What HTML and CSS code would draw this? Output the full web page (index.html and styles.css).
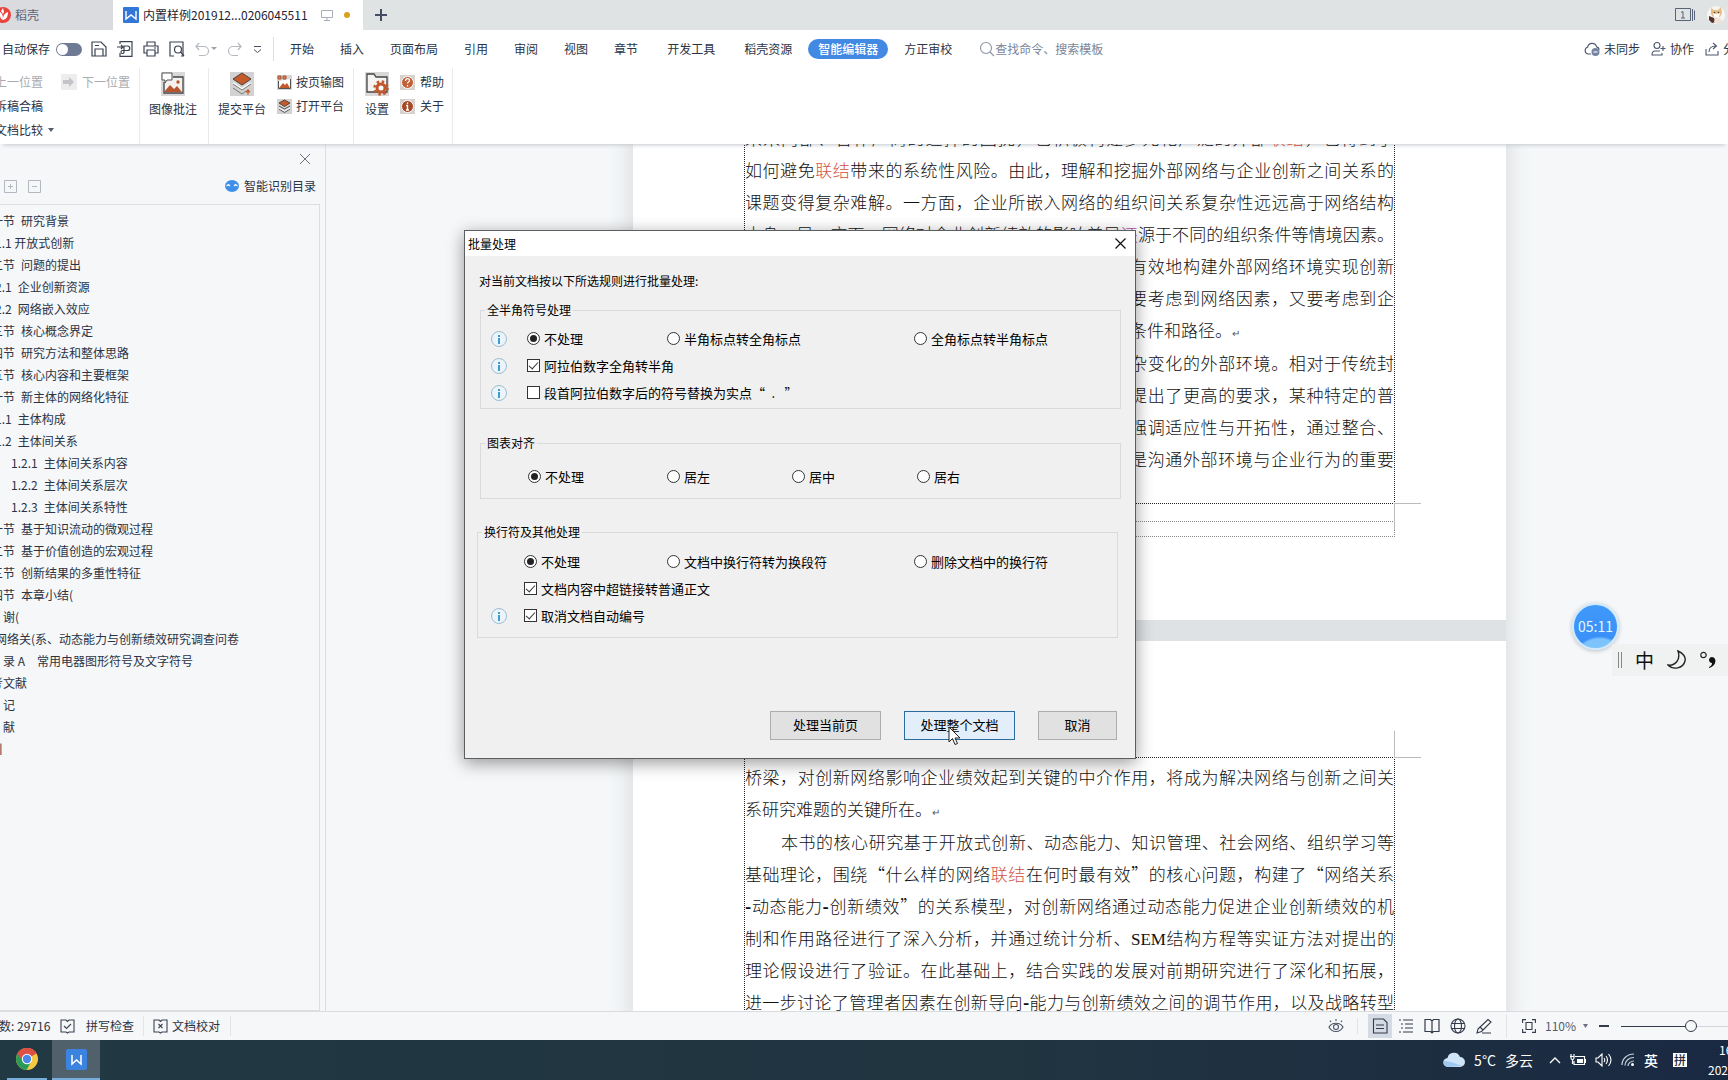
FILE: index.html
```html
<!DOCTYPE html>
<html lang="zh-CN">
<head>
<meta charset="utf-8">
<title>内置样例 - 批量处理</title>
<link rel="stylesheet" href="styles.css">
</head>
<body>
<header class="tabbar">
  <button class="doc-tab home-tab">
    <svg class="docer" width="12" height="18" viewBox="0 0 12 18"><circle cx="3" cy="9" r="8" fill="#e8443c"/><path d="M3 14C-1 12 0 8 0 6c2 1 3 3 3 8zM3 14c0-5 2-7 5-8 0 4-1 7-5 8zM1 5l2-3 1 4-1 2z" fill="#fff"/></svg>
    <span>稻壳</span>
  </button>
  <button class="doc-tab active-tab">
    <svg width="16" height="16" viewBox="0 0 16 16"><rect width="16" height="16" rx="1" fill="#3277d8"/><path d="M3 4v8l5-4 5 4V4" fill="none" stroke="#fff" stroke-width="1.4"/></svg>
    <span class="tab-title">内置样例201912...0206045511</span>
    <svg width="12" height="12" viewBox="0 0 12 12" fill="none" stroke="#a9afba"><path d="M.5 1.500h11v7H.5zM6 8.500v3M3 11.500h6"/></svg>
    <i class="unsaved"></i>
  </button>
  <button class="new-tab" aria-label="新建"><svg width="12" height="12" viewBox="0 0 12 12"><path d="M6 0v12M0 6h12" stroke="#444d63" stroke-width="2"/></svg></button>
  <div class="tabbar-end">
    <svg width="21" height="16" viewBox="0 0 21 16" fill="none" stroke="#58637a"><path d="M.5 1.500h15v12H.5zM17.500 2v12M19.500 3.500V13M6 5.500l2-1V11M6 11h4"/></svg>
    <svg width="21" height="20" viewBox="0 0 21 20"><circle cx="9" cy="10" r="9" fill="#f8f5f1"/><path d="M4 3l3 2h4l3-3 1 6-2 4H6L4 9z" fill="#e6bd87"/><path d="M6 8l3 1 4-1-1 4H7z" fill="#fff"/><path d="M2 11l5 2 2 4-4 1-3-3z" fill="#52312a"/><path d="M8 12l5 1 3 4-5 2-4-2z" fill="#eee2d8"/><circle cx="7.500" cy="7.500" r=".8" fill="#47362c"/><circle cx="11.500" cy="7.500" r=".8" fill="#47362c"/></svg>
  </div>
</header>

<nav class="menubar">
  <label class="autosave">自动保存<input type="checkbox" class="switch"></label>
  <div class="quick">
    <button aria-label="保存"><svg width="16" height="16" viewBox="0 0 16 16" fill="none" stroke="#3c4353" stroke-width="1.200"><path d="M1 1h9l5 5v9H1zM4 15V8h8v7M4 4.500h4"/></svg></button>
    <button aria-label="输出为PDF"><svg width="16" height="16" viewBox="0 0 16 16" fill="none" stroke="#3c4353" stroke-width="1.200"><path d="M3 3V.600h12v14.800H3V12M0 6h6M4 4l2 2-2 2M7 12V5h3.500a2.200 2.200 0 0 1 0 4.500H5.500a1.500 1.500 0 1 0 1.500 1.500"/></svg></button>
    <button aria-label="打印"><svg width="16" height="16" viewBox="0 0 16 16" fill="none" stroke="#3c4353" stroke-width="1.200"><path d="M4 5V1h8v4M4 12H1V5h14v7h-3M4 9h8v6H4zM11 7h2"/></svg></button>
    <button aria-label="打印预览"><svg width="16" height="16" viewBox="0 0 16 16" fill="none" stroke="#3c4353" stroke-width="1.200"><path d="M5 15H1V1h13v14h-2"/><circle cx="9" cy="8.500" r="3.500"/><path d="M11.500 11l3.500 4"/></svg></button>
    <button aria-label="撤销"><svg width="22" height="16" viewBox="0 0 22 16" fill="none" stroke="#b4b8bf" stroke-width="1.200"><path d="M4 2L1 5.500 4 9M1 5.500h8a4.500 4.500 0 0 1 0 9H4"/><path d="M16 6h6l-3 3z" fill="#9da2ab" stroke="none"/></svg></button>
    <button aria-label="恢复"><svg width="16" height="16" viewBox="0 0 16 16" fill="none" stroke="#b4b8bf" stroke-width="1.200"><path d="M11 2l3 3.500L11 9M14 5.500H6a4.500 4.500 0 0 0 0 9h5"/></svg></button>
    <button aria-label="更多"><svg width="9" height="10" viewBox="0 0 9 10" fill="none" stroke="#4b5262"><path d="M1 2.500h7M1 5.500l3.500 3L8 5.500"/></svg></button>
  </div>
  <div class="menus">
    <button>开始</button><button>插入</button><button>页面布局</button><button>引用</button><button>审阅</button><button>视图</button><button>章节</button><button class="spaced">开发工具</button><button>稻壳资源</button><button class="current">智能编辑器</button><button>方正审校</button>
  </div>
  <label class="search"><svg width="16" height="16" viewBox="0 0 16 16" fill="none" stroke="#8c95a5" stroke-width="1.100"><circle cx="7" cy="7" r="5.500"/><path d="M11 11l4 4"/></svg><input type="text" placeholder="查找命令、搜索模板" aria-label="查找命令、搜索模板"></label>
  <div class="menubar-end">
    <button><svg width="16" height="16" viewBox="0 0 16 16" fill="none" stroke="#4d586e" stroke-width="1.100"><path d="M7 13H4a3.500 3.500 0 0 1-.4-6.800 4.600 4.600 0 0 1 9-.3A3 3 0 0 1 15 9"/><circle cx="11.500" cy="11" r="4" fill="#7784a0" stroke="none"/><path d="M9.500 11h4" stroke="#fff"/></svg>未同步</button>
    <button><svg width="15" height="16" viewBox="0 0 15 16" fill="none" stroke="#4d586e" stroke-width="1.100"><circle cx="6" cy="4.500" r="3"/><path d="M9 10H4c-2 0-3 1-3 4h10v-2M9.500 7.500h5M12 5v5"/></svg>协作</button>
    <button class="share"><svg width="14" height="16" viewBox="0 0 14 16" fill="none" stroke="#4d586e" stroke-width="1.100"><path d="M1 8v6h12v-4M4 11c0-4 2-6 7-6M8 2l3.500 3L8 8"/></svg>分享</button>
  </div>
</nav>

<section class="ribbon">
  <div class="group nav-group">
    <button class="off cut">上一位置</button>
    <button class="off"><svg width="16" height="16" viewBox="0 0 16 16"><rect width="16" height="16" fill="#ededee"/><path d="M2 6h6V3l5 5-5 5v-3H2z" fill="#c2c4c7"/></svg>下一位置</button>
    <button class="cut">拆稿合稿</button><span></span>
    <button class="cut">文档比较<svg width="6" height="4" viewBox="0 0 6 4"><path d="M0 0h6L3 4z" fill="#555c6a"/></svg></button>
  </div>
  <div class="group">
    <button class="big"><svg width="24" height="24" viewBox="0 0 24 24"><rect width="24" height="24" fill="#d8d8d8"/><path d="M3 10v11h19V5H12" fill="#f4f1ef" stroke="#444" stroke-width="1.300"/><path d="M1 1h10v7H6l-2 3V8H1z" fill="#fff" stroke="#555"/><path d="M3 20l6-7 4 4 3-3 5 6z" fill="#b9552e"/><circle cx="17" cy="10" r="1.700" fill="#b9552e"/></svg>图像批注</button>
  </div>
  <div class="group submit">
    <button class="big"><svg width="24" height="24" viewBox="0 0 24 24"><rect width="24" height="24" fill="#d2d2d2"/><path d="M3 7l9-6 9 6-9 6z" fill="#c55a2b" stroke="#50413a"/><path d="M3 11l9 6 9-6" fill="none" stroke="#fff" stroke-width="2"/><path d="M3 12l9 6 9-6M3 16l9 6 4-3" fill="none" stroke="#777"/><path d="M18 23v-5M16 20l2-2.500 2 2.500z" stroke="#c55a2b" fill="#c55a2b"/></svg>提交平台</button>
    <div class="stack">
      <button><svg width="15" height="15" viewBox="0 0 15 15"><rect width="15" height="15" fill="#d8d5d3"/><path d="M1.500 6v7.500h12V4" fill="#fff" stroke="#555"/><path d="M2 13l4-5 2 2 2-2 3 5z" fill="#c45b30"/><path d="M1 1h3v3H1zM6 1h3v3H6z" fill="#d98462" stroke="#a4502d"/></svg>按页输图</button>
      <button><svg width="15" height="15" viewBox="0 0 15 15"><rect width="15" height="15" fill="#d2d2d2"/><path d="M2 4l5.500-3L13 4 7.500 7.500z" fill="#c55a2b" stroke="#5c4238"/><path d="M2 7l5.500 3L13 7M2 10l5.500 3.500L13 10" fill="none" stroke="#555"/><path d="M2 9l5.500 3L13 9" fill="none" stroke="#fff"/></svg>打开平台</button>
    </div>
  </div>
  <div class="group settings">
    <button class="big"><svg width="24" height="24" viewBox="0 0 24 24"><rect width="24" height="24" fill="#d8d8d8"/><path d="M2 20V2h7l2 3h11v15z" fill="#f5f4f3" stroke="#444" stroke-width="1.300"/><circle cx="16" cy="16" r="4" fill="#fff" stroke="#c0582c" stroke-width="3"/><circle cx="16" cy="16" r="6.500" fill="none" stroke="#c0582c" stroke-width="2.500" stroke-dasharray="2.500 2.600"/></svg>设置</button>
    <div class="stack">
      <button><svg width="15" height="15" viewBox="0 0 15 15"><rect width="15" height="15" fill="#d5d2d0"/><circle cx="7.500" cy="7.500" r="6" fill="#c35e36" stroke="#fff"/><path d="M5.500 6c0-3 4-3 4-.500 0 1.500-2 1.500-2 3M7.500 10v1.500" fill="none" stroke="#fff" stroke-width="1.300"/></svg>帮助</button>
      <button><svg width="15" height="15" viewBox="0 0 15 15"><rect width="15" height="15" fill="#d5d2d0"/><circle cx="7.500" cy="7.500" r="6" fill="#a84a26" stroke="#fff"/><path d="M7.500 3.500V5M6 6.500h1.500V11M6 11h3" fill="none" stroke="#fff" stroke-width="1.400"/></svg>关于</button>
    </div>
  </div>
</section>

<main class="workspace">
  <aside class="outline">
    <div class="outline-close"><button aria-label="关闭"><svg width="10" height="10" viewBox="0 0 10 10"><path d="M0 0l10 10M10 0L0 10" stroke="#6a7180"/></svg></button></div>
    <div class="outline-tools">
      <button aria-label="展开"><svg width="13" height="13" viewBox="0 0 13 13" fill="none" stroke="#b3b7bf"><path d="M.5.500h12v12H.5zM4 6.500h5M6.500 4v5"/></svg></button>
      <button aria-label="折叠"><svg width="13" height="13" viewBox="0 0 13 13" fill="none" stroke="#b3b7bf"><path d="M.5.500h12v12H.5zM4 6.500h5"/></svg></button>
      <button class="smart"><svg width="14" height="12" viewBox="0 0 14 12"><ellipse cx="7" cy="6" rx="7" ry="6" fill="#3f8fe8"/><path d="M1.500 6l2-1.500L5 6M9 6l1.500-1.500L12.500 6" fill="none" stroke="#fff" stroke-width="1.200"/></svg>智能识别目录</button>
    </div>
    <ul class="toc">
      <li class="sec">一节&ensp;研究背景</li>
      <li class="sub">1.1 开放式创新</li>
      <li class="sec">二节&ensp;问题的提出</li>
      <li class="sub">2.1&ensp;企业创新资源</li>
      <li class="sub">2.2&ensp;网络嵌入效应</li>
      <li class="sec">三节&ensp;核心概念界定</li>
      <li class="sec">四节&ensp;研究方法和整体思路</li>
      <li class="sec">五节&ensp;核心内容和主要框架</li>
      <li class="sec">一节&ensp;新主体的网络化特征</li>
      <li class="sub">1.1&ensp;主体构成</li>
      <li class="sub">1.2&ensp;主体间关系</li>
      <li class="deep">1.2.1&ensp;主体间关系内容</li>
      <li class="deep">1.2.2&ensp;主体间关系层次</li>
      <li class="deep">1.2.3&ensp;主体间关系特性</li>
      <li class="sec">一节&ensp;基于知识流动的微观过程</li>
      <li class="sec">二节&ensp;基于价值创造的宏观过程</li>
      <li class="sec">三节&ensp;创新结果的多重性特征</li>
      <li class="sec">四节&ensp;本章小结(</li>
      <li class="flat">谢(</li>
      <li class="sub">网络关(系、动态能力与创新绩效研究调查问卷</li>
      <li class="flat">录 A　常用电器图形符号及文字符号</li>
      <li class="sec">考文献</li>
      <li class="flat">记</li>
      <li class="flat">献</li>
      <li class="sec">引</li>
    </ul>
  </aside>

  <div class="canvas">
    <div class="pages">
      <article class="page first">
        <div class="frame">
          <p><span>来来内部、合作厂商的选择的困扰，也积极构建多元化广泛的外部<em>联结</em>，也得到了</span>
          <span>如何避免<em>联结</em>带来的系统性风险。由此，理解和挖掘外部网络与企业创新之间关系的</span>
          <span>课题变得复杂难解。一方面，企业所嵌入网络的组织间关系复杂性远远高于网络结构</span>
          <span>本身。另一方面，网络对企业创新绩效的影响差异<b class="mark">还</b>源于不同的组织条件等情境因素。</span>
          <span class="tail">有效地构建外部网络环境实现创新</span>
          <span class="tail">要考虑到网络因素，又要考虑到企</span>
          <span class="tail last">条件和路径。<small>↵</small></span></p>
          <p><span class="tail">杂变化的外部环境。相对于传统封</span>
          <span class="tail">提出了更高的要求，某种特定的普</span>
          <span class="tail">强调适应性与开拓性，通过整合、</span>
          <span class="tail">是沟通外部环境与企业行为的重要</span></p>
        </div>
        <div class="page-foot"></div>
      </article>
      <article class="page second">
        <div class="frame">
          <p><span>桥梁，对创新网络影响企业绩效起到关键的中介作用，将成为解决网络与创新之间关</span>
          <span class="last">系研究难题的关键所在。<small>↵</small></span></p>
          <p><span class="indent">本书的核心研究基于开放式创新、动态能力、知识管理、社会网络、组织学习等</span>
          <span>基础理论，围绕“什么样的网络<em>联结</em>在何时最有效”的核心问题，构建了“网络关系</span>
          <span><b>-</b>动态能力<b>-</b>创新绩效”的关系模型，对创新网络通过动态能力促进企业创新绩效的机</span>
          <span>制和作用路径进行了深入分析，并通过统计分析、<i>SEM</i>结构方程等实证方法对提出的</span>
          <span>理论假设进行了验证。在此基础上，结合实践的发展对前期研究进行了深化和拓展，</span>
          <span>进一步讨论了管理者因素在创新导向<b>-</b>能力与创新绩效之间的调节作用，以及战略转型</span></p>
        </div>
      </article>
    </div>
  </div>
</main>

<footer class="statusbar">
  <span class="count">数: 29716</span>
  <button class="spell"><svg width="15" height="15" viewBox="0 0 15 15" fill="none" stroke="#3c4353" stroke-width="1.100"><path d="M6 1H1v12h5l1.500 1L9 13h5V1H9L7.500 2.500z"/><path d="M4 7l2.500 2.500L11 5"/></svg>拼写检查</button>
  <button class="proof"><svg width="15" height="15" viewBox="0 0 15 15" fill="none" stroke="#3c4353" stroke-width="1.100"><path d="M6 1H1v12h5l1.500 1L9 13h5V1H9L7.500 2.500z"/><path d="M5.500 5l4 4M9.500 5l-4 4"/></svg>文档校对</button>
  <div class="views">
    <button aria-label="护眼" class="eye"><svg width="16" height="16" viewBox="0 0 16 16" fill="none" stroke="#4a5161" stroke-width="1.100"><path d="M1 9c3-5 11-5 14 0-3 6-11 6-14 0zM3 4L2 2.500M8 3V1M13 4l1-1.500"/><circle cx="8" cy="9" r="2.500"/></svg></button>
    <button aria-label="页面视图" class="on"><svg width="16" height="16" viewBox="0 0 16 16" fill="none" stroke="#343b4a" stroke-width="1.100"><path d="M1.500 1h10L15 4.500V15H1.500zM4 7h8M4 10.500h8"/></svg></button>
    <button aria-label="大纲"><svg width="16" height="16" viewBox="0 0 16 16" fill="none" stroke="#343b4a" stroke-width="1.200"><path d="M1 2h2M5 2h10M3 6h2M7 6h8M3 10h2M7 10h8M1 14h2M5 14h10"/></svg></button>
    <button aria-label="阅读版式"><svg width="16" height="16" viewBox="0 0 16 16" fill="none" stroke="#343b4a" stroke-width="1.200"><path d="M8 3L6.500 1.500H1v12h5.500L8 15l1.500-1.500H15v-12H9.500zM8 3v11"/></svg></button>
    <button aria-label="Web版式"><svg width="16" height="16" viewBox="0 0 16 16" fill="none" stroke="#343b4a" stroke-width="1.100"><circle cx="8" cy="8" r="7"/><ellipse cx="8" cy="8" rx="3.500" ry="7"/><path d="M1.500 5.500h13M1.500 10.500h13"/></svg></button>
    <button aria-label="写作模式"><svg width="16" height="16" viewBox="0 0 16 16" fill="none" stroke="#343b4a" stroke-width="1.100"><path d="M2 11L12 1.500l3 2.500L5.500 13.500 1 15zM4 9l3 3M6 15h9"/></svg></button>
  </div>
  <div class="zoom">
    <button aria-label="适合窗口"><svg width="14" height="14" viewBox="0 0 14 14" fill="none" stroke="#343b4a" stroke-width="1.100"><path d="M.6 4V.600H4M10 .600h3.400V4M13.400 10v3.400H10M4 13.400H.6V10M4 3.500h6v7H4z"/></svg></button>
    <button class="percent">110%<svg width="5" height="4" viewBox="0 0 5 4"><path d="M0 0h5L2.500 4z" fill="#6a7180"/></svg></button>
    <button aria-label="缩小"><svg width="10" height="2" viewBox="0 0 10 2"><path d="M0 0h10v2H0z" fill="#343b4a"/></svg></button>
    <input type="range" aria-label="显示比例" min="0" max="100" value="50">
  </div>
</footer>

<footer class="taskbar">
  <button class="app chrome" aria-label="Chrome"><svg width="22" height="22" viewBox="0 0 22 22"><circle cx="11" cy="11" r="11" fill="#f6c944"/><path d="M11 11L1.500 5.500A11 11 0 0 1 20.500 5.500z" fill="#dc5144"/><path d="M11 11L1.500 5.500A11 11 0 0 0 10.500 22l4.500-8z" fill="#2c9a57"/><path d="M11 6h9.700A11 11 0 0 0 1.500 5.500L6.500 13z" fill="#dc5144"/><circle cx="11" cy="11" r="5.200" fill="#fff"/><circle cx="11" cy="11" r="4.200" fill="#4a87e8"/></svg></button>
  <button class="app wps" aria-label="WPS"><svg width="21" height="21" viewBox="0 0 21 21"><rect width="21" height="21" rx="2" fill="#3c82df"/><path d="M6 6v9l4.500-4 4.500 4V6" fill="none" stroke="#fff" stroke-width="1.500"/></svg></button>
  <div class="tray">
    <svg width="22" height="16" viewBox="0 0 22 16"><path d="M5 15a4.500 4.500 0 0 1-.5-9A6.500 6.500 0 0 1 17 5a5 5 0 0 1 0 10z" fill="#cfe4f7"/><path d="M5 15a4.500 4.500 0 0 1-4-6c5 0 13 3 18 5z" fill="#9ec8ee"/></svg>
    <span class="temp">5°C</span><span class="sky">多云</span>
    <svg width="12" height="8" viewBox="0 0 12 8"><path d="M1 7l5-5 5 5" fill="none" stroke="#fff" stroke-width="1.300"/></svg>
    <svg width="16" height="12" viewBox="0 0 16 12" fill="none" stroke="#fff" stroke-width="1.200"><path d="M5 2.500h9.500v8H4V7M0 2.500h4M1 0v4c0 2 3 2 3 0V0M2.500 6v4M15.500 5v4"/><path d="M7 5h6v4H7z" fill="#fff" stroke="none"/></svg>
    <svg width="17" height="14" viewBox="0 0 17 14" fill="none" stroke="#fff" stroke-width="1.100"><path d="M1 5h2l4-4v12L3 9H1zM9 5q1.500 2 0 4M11 3q3 4 0 8M13.500 1q5 6 0 12"/></svg>
    <svg width="14" height="14" viewBox="0 0 14 14" fill="none" stroke="#c9d2dc" stroke-width="1.200"><path d="M1 12C1 6 6 1 13 1M4 12.500C4 8 8 4.500 13 4.500M7 13c0-3 3-5 6-5"/><circle cx="11.500" cy="11.500" r="1.500" fill="#fff" stroke="none"/></svg>
    <b class="lang">英</b><b class="ime">拼</b>
    <div class="clock"><span>16</span><span>202</span></div>
  </div>
</footer>

<div class="timer">05:11</div>
<div class="imebar">
  <i></i><span>中</span>
  <svg width="20" height="20" viewBox="0 0 20 20"><path d="M11 1c5 2 8 6 7 10-2 8-12 9-17 4 7 1 13-5 10-14z" fill="none" stroke="#222" stroke-width="1.400"/></svg>
  <svg width="17" height="18" viewBox="0 0 17 18"><circle cx="3.500" cy="4" r="2.700" fill="none" stroke="#222" stroke-width="1.200"/><path d="M9 16c2-1 3-2 3-4-4 0-4-6 0-6 5 0 5 9-3 11z" fill="#111"/></svg>
</div>

<section class="dialog" role="dialog" aria-labelledby="dlg-title">
  <div class="dialog-title"><h1 id="dlg-title">批量处理</h1><button aria-label="关闭"><svg width="11" height="11" viewBox="0 0 11 11"><path d="M.5.500l10 10M10.500.500l-10 10" stroke="#111" stroke-width="1.200"/></svg></button></div>
  <form class="dialog-body">
    <p class="intro">对当前文档按以下所选规则进行批量处理:</p>
    <fieldset class="symbols">
      <legend>全半角符号处理</legend>
      <div class="row"><i class="info"></i><label><input type="radio" name="sym" checked>不处理</label><label><input type="radio" name="sym">半角标点转全角标点</label><label><input type="radio" name="sym">全角标点转半角标点</label></div>
      <div class="row"><i class="info"></i><label class="wide"><input type="checkbox" checked>阿拉伯数字全角转半角</label></div>
      <div class="row"><i class="info"></i><label class="wide"><input type="checkbox">段首阿拉伯数字后的符号替换为实点“&ensp;.&ensp;&nbsp;”</label></div>
    </fieldset>
    <fieldset class="align">
      <legend>图表对齐</legend>
      <div class="row"><span></span><label><input type="radio" name="al" checked>不处理</label><label><input type="radio" name="al">居左</label><label><input type="radio" name="al">居中</label><label><input type="radio" name="al">居右</label></div>
    </fieldset>
    <fieldset class="breaks">
      <legend>换行符及其他处理</legend>
      <div class="row"><span></span><label><input type="radio" name="br" checked>不处理</label><label><input type="radio" name="br">文档中换行符转为换段符</label><label><input type="radio" name="br">删除文档中的换行符</label></div>
      <div class="row"><span></span><label class="wide"><input type="checkbox" checked>文档内容中超链接转普通正文</label></div>
      <div class="row"><i class="info"></i><label class="wide"><input type="checkbox" checked>取消文档自动编号</label></div>
    </fieldset>
    <div class="actions">
      <button type="button">处理当前页</button>
      <button type="button" class="hot">处理整个文档<svg class="pointer" width="13" height="20" viewBox="0 0 13 20"><path d="M1 1v15l3.500-3.500L7 18.500l2.500-1L7 12h5z" fill="#fff" stroke="#222"/></svg></button>
      <button type="button" class="cancel">取消</button>
    </div>
  </form>
</section>
</body>
</html>
```
FILE: styles.css
```css
* { box-sizing: border-box; }

body {
  margin: 0;
  height: 100vh;
  position: relative;
  display: flex;
  flex-direction: column;
  overflow: hidden;
  font: 12px/20px "Noto Sans CJK SC", "Noto Sans", sans-serif;
  color: #2b3344;
  background: #f5f7f9;
}

button, input {
  font: inherit;
  color: inherit;
  margin: 0;
}

button {
  display: flex;
  align-items: center;
  padding: 0;
  border: 0;
  background: none;
  white-space: nowrap;
}

svg { display: block; flex: none; }
h1, p, ul, fieldset { margin: 0; padding: 0; }

/* document tabs */
.tabbar {
  flex: none;
  display: flex;
  height: 30px;
  background: #e0e3e4;
}
.home-tab { width: 113px; gap: 3px; background: #d9dbde; color: #5a6377; }
.active-tab { width: 250px; padding-left: 10px; gap: 4px; background: #fff; color: #1d2433; }
.tab-title { width: 174px; text-align: left; }
.unsaved { width: 6px; height: 6px; margin-left: 7px; border-radius: 50%; background: #d9a01f; }
.new-tab { margin-left: 12px; }
.tabbar-end { margin-left: auto; display: flex; align-items: center; gap: 11px; }

/* menu row */
.menubar {
  flex: none;
  display: flex;
  align-items: center;
  height: 38px;
  padding-left: 2px;
  background: #fff;
}
.autosave { display: flex; align-items: center; gap: 6px; white-space: nowrap; }
.switch {
  appearance: none;
  display: flex;
  width: 26px;
  height: 13px;
  padding: 1px;
  border-radius: 7px;
  background: #6f7a94;
}
.switch::before { content: ""; width: 11px; height: 11px; border-radius: 50%; background: #fff; }
.quick {
  display: flex;
  align-items: center;
  gap: 10px;
  height: 24px;
  padding: 0 11px 0 9px;
  border-right: 1px solid #dcdfe3;
}
.menus { display: flex; align-items: center; gap: 26px; margin-left: 16px; }
.menus .spaced { padding: 0 3px; }
.menus .current {
  margin: 0 -10px;
  padding: 0 10px;
  border-radius: 10px;
  color: #fff;
  font-weight: 500;
  background: #4289e4;
}
.search { display: flex; align-items: center; margin-left: 27px; }
.search input { width: 120px; padding: 0; border: 0; outline: 0; }
.search input::placeholder { color: #7a8599; opacity: 1; }
.menubar-end { display: flex; gap: 11px; margin-left: auto; }
.menubar-end button { gap: 4px; }
.menubar-end .share { width: 23px; overflow: hidden; }

/* ribbon */
.ribbon {
  flex: none;
  position: relative;
  display: flex;
  height: 76px;
  background: #fff;
  box-shadow: 0 4px 4px -3px #c4c7cb;
}
.group {
  display: flex;
  align-items: flex-start;
  gap: 11px;
  padding: 4px 11px 0 9px;
  border-right: 1px solid #e8eaec;
}
.group .big { flex-direction: column; gap: 3px; }
.nav-group {
  display: grid;
  grid-template-columns: 61px 69px;
  grid-auto-rows: 24px;
  gap: 0;
  width: 140px;
  padding: 4px 9px 0 0;
}
.nav-group button { gap: 5px; }
.nav-group .cut { margin-left: -5px; }
.nav-group .off { color: #a9abaf; }
.stack { display: flex; flex-direction: column; gap: 4px; }
.stack button { gap: 4px; }
.submit { padding: 4px 9px 0; }
.settings { padding: 4px 8px 0 11px; }
.settings .stack button { gap: 5px; }

/* outline pane */
.workspace { flex: 1; min-height: 0; display: flex; }
.outline {
  flex: none;
  display: flex;
  flex-direction: column;
  width: 326px;
  border-right: 1px solid #dcdfe2;
  overflow: hidden;
}
.outline-close { display: flex; justify-content: flex-end; padding: 10px 15px 0 0; }
.outline-tools {
  display: flex;
  align-items: center;
  gap: 11px;
  height: 40px;
  margin-top: 2px;
  padding: 0 9px 0 4px;
}
.outline-tools .smart { margin-left: auto; gap: 5px; }
.toc {
  flex: 1;
  list-style: none;
  width: 320px;
  margin-top: -2px;
  padding-top: 5px;
  border: 1px solid #dcdfe2;
  border-left: 0;
}
.toc li { height: 22px; line-height: 22px; white-space: nowrap; }
.toc .sec { margin-left: -9px; }
.toc .sub { margin-left: -5px; }
.toc .deep { margin-left: 11px; }
.toc .flat { margin-left: 3px; }

/* document canvas */
.canvas {
  flex: 1;
  min-width: 0;
  display: flex;
  align-items: flex-start;
  justify-content: center;
  padding-left: 85px;
  overflow: hidden;
}
.pages {
  flex: none;
  display: flex;
  flex-direction: column;
  gap: 21px;
  width: 873px;
  margin-top: -22px;
  background: #dfe2e4;
  box-shadow: 0 0 18px 6px #dfe2e4;
}
.page { padding: 0 111px; background: #fff; }
.page.first { padding-bottom: 83px; }
.page.second { padding-top: 116px; }
.frame {
  position: relative;
  border: 1px dotted #222;
  font-size: 17px;
  line-height: 32px;
  font-weight: 300;
  color: #111;
}
.first .frame { border-top: 0; padding-bottom: 28px; }
.second .frame { padding-top: 3px; border-bottom: 0; }
.frame p + p { margin-top: 1px; }
.frame span {
  display: block;
  height: 32px;
  white-space: nowrap;
  text-align-last: justify;
}
.frame .tail { width: 264px; margin-left: auto; }
.frame .last { text-align-last: left; }
.frame .indent { padding-left: 36px; }
.frame em { font-style: normal; color: #d0513f; }
.frame i { font: 400 17px "Liberation Serif", serif; }
.frame b { font-weight: 700; }
.frame .mark { font-weight: 300; color: #b04fb0; }
.frame small { font-size: 10px; color: #555; }

/* crop marks at the text area corners */
.frame::after {
  content: "";
  position: absolute;
  right: -27px;
  width: 26px;
  height: 26px;
}
.first .frame::after { bottom: -27px; border-top: 1px solid #bbb; border-left: 1px solid #bbb; }
.second .frame::after { top: -27px; border-bottom: 1px solid #bbb; border-left: 1px solid #bbb; }
.page-foot { height: 16px; margin-top: 17px; border: 1px dotted #888; }

/* status bar */
.statusbar {
  flex: none;
  display: flex;
  align-items: center;
  height: 29px;
  border-top: 1px solid #d9dcdf;
  overflow: hidden;
}
.count { width: 61px; margin-left: -1px; white-space: nowrap; }
.spell { gap: 11px; padding-right: 9px; border-right: 1px solid #e1e4e8; }
.proof { gap: 4px; margin-left: 9px; padding-right: 10px; border-right: 1px solid #e1e4e8; }
.views { display: flex; align-items: center; gap: 10px; margin-left: auto; padding-right: 14px; border-right: 1px solid #e1e4e8; }
.views .eye { padding-right: 13px; border-right: 1px solid #e1e4e8; }
.views .on { height: 24px; margin-right: -4px; padding: 0 4px; background: #d5dbe4; }
.zoom { display: flex; align-items: center; width: 221px; padding-left: 15px; }
.percent { gap: 7px; margin: 0 11px 0 9px; color: #555d6c; }
.zoom input {
  appearance: none;
  flex: none;
  width: 140px;
  height: 12px;
  margin-left: 12px;
  background: linear-gradient(90deg, #343b4a 50%, #d3d7dc 50%) center / 100% 1px no-repeat;
}
.zoom input::-webkit-slider-thumb {
  appearance: none;
  width: 12px;
  height: 12px;
  border: 1px solid #343b4a;
  border-radius: 50%;
  background: #f5f7f9;
}

/* taskbar */
.taskbar {
  flex: none;
  display: flex;
  height: 40px;
  padding-left: 7px;
  color: #fff;
  background: linear-gradient(90deg, #213942, #203440 60%, #1a2942);
  overflow: hidden;
}
.app { justify-content: center; border-bottom: 2px solid #76addb; }
.chrome { width: 40px; margin-right: 5px; }
.wps { width: 48px; background: #50616b; }
.tray { display: flex; align-items: center; margin-left: auto; gap: 9px; font-size: 14px; }
.tray .sky { margin-right: 7px; }
.lang { font-weight: 500; }
.ime {
  width: 14px;
  height: 14px;
  margin: 0 12px 0 6px;
  font-size: 12px;
  line-height: 14px;
  font-weight: 500;
  text-align: center;
  color: #1b2b40;
  background: #fff;
}
.clock {
  display: flex;
  flex-direction: column;
  align-items: flex-end;
  width: 20px;
  font-size: 12px;
}
.clock span:first-child { width: 9px; }

/* floating widgets */
.timer {
  position: absolute;
  right: 109px;
  top: 603px;
  width: 47px;
  height: 47px;
  border: 2px solid #cfeaff;
  border-radius: 50%;
  line-height: 43px;
  font-size: 14px;
  text-align: center;
  color: #e4f7ff;
  background: radial-gradient(circle at 60% 140%, #7cc4fb 40%, #3b90f8 44%, #3f9bfa);
  box-shadow: 0 1px 4px #b8bcc0;
}
.imebar {
  position: absolute;
  right: 0;
  top: 644px;
  display: flex;
  align-items: center;
  gap: 13px;
  width: 116px;
  height: 32px;
  padding-left: 6px;
  font-size: 19px;
  color: #111;
  background: #f0f1f1;
}
.imebar i { width: 4px; height: 16px; border: 1px solid #888; border-width: 0 1px; }

/* batch dialog */
.dialog {
  position: absolute;
  left: 464px;
  top: 230px;
  width: 672px;
  border: 1px solid #5c5f62;
  color: #000;
  background: #f0f0f0;
  box-shadow: 0 4px 16px rgba(0, 0, 0, .4);
}
.dialog-title {
  display: flex;
  align-items: center;
  justify-content: space-between;
  height: 25px;
  padding: 0 9px 0 3px;
  background: #fff;
}
.dialog-title h1 { font-size: 12px; font-weight: 400; }
.dialog-body { padding: 15px 14px 18px; }
.dialog fieldset { min-width: 0; margin-left: 1px; border: 1px solid #dadada; }
.dialog legend { margin-left: 4px; padding: 0 2px; }
.dialog .symbols { margin-top: 9px; padding: 5px 0 2px; }
.dialog .align { margin-top: 24px; padding: 10px 0 8px; }
.dialog .breaks { margin: 23px 3px 0 -2px; padding: 6px 0 8px; }
.row {
  display: grid;
  grid-template-columns: 36px 140px 247px 1fr;
  align-items: center;
  height: 27px;
  padding-left: 10px;
  font-size: 13px;
}
.align .row { grid-template-columns: 37px 139px 125px 125px 1fr; }
.breaks .row { grid-template-columns: 33px 143px 247px 1fr; padding-left: 13px; }
.row label { display: flex; align-items: center; gap: 4px; white-space: nowrap; }
.row .wide { grid-column: 2 / -1; }
.row input {
  appearance: none;
  flex: none;
  display: flex;
  align-items: center;
  justify-content: center;
  width: 13px;
  height: 13px;
  border: 1px solid #333;
  background: #fff;
}
.row input[type="radio"] { border-radius: 50%; }
.row input[type="radio"]:checked::before {
  content: "";
  width: 7px;
  height: 7px;
  border-radius: 50%;
  background: #222;
}
.row input[type="checkbox"]:checked::before {
  content: "";
  width: 4px;
  height: 8px;
  margin-bottom: 2px;
  border: solid #333;
  border-width: 0 1px 1px 0;
  transform: rotate(42deg);
}
.info {
  width: 16px;
  height: 16px;
  border: 1px solid #9dbdd0;
  border-radius: 50%;
  background:
    linear-gradient(#3d9cc9, #3d9cc9) 6px 3px / 2px 2px no-repeat,
    linear-gradient(#3d9cc9, #3d9cc9) 6px 6px / 2px 6px no-repeat,
    #eaf4fa;
}
.actions { display: flex; justify-content: flex-end; gap: 23px; margin-top: 73px; padding-right: 4px; }
.actions button {
  position: relative;
  justify-content: center;
  width: 111px;
  height: 29px;
  padding-bottom: 2px;
  border: 1px solid #adadad;
  font-size: 13px;
  background: #e1e1e1;
}
.actions .hot { border-color: #2b6c9e; background: #e2effb; }
.actions .cancel { width: 79px; }
.pointer { position: absolute; left: 43px; top: 14px; }
```
